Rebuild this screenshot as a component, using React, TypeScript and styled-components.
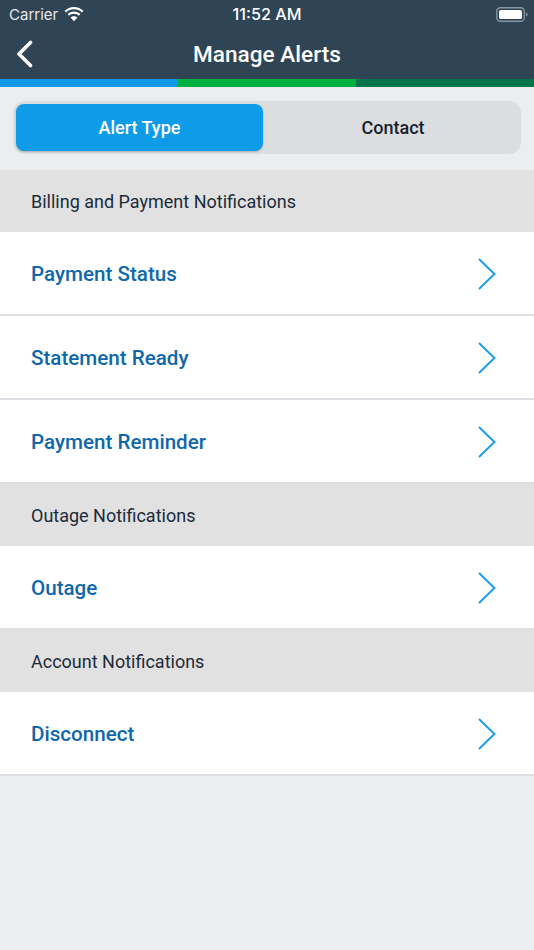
import { FC } from 'react';
import styled, { createGlobalStyle } from 'styled-components';

const Global = createGlobalStyle`
  html, body {
    margin: 0;
    padding: 0;
    background: #ecedef;
  }
  * {
    box-sizing: border-box;
  }
`;

const Page = styled.div`
  width: 534px;
  height: 950px;
  overflow: hidden;
  background: #ecedef;
  font-family: Roboto, "Liberation Sans", sans-serif;
`;

const Header = styled.header`
  background: #2f4455;
  height: 79px;
  color: #fff;
`;

const StatusBar = styled.div`
  height: 28px;
  padding: 0 9px;
  display: grid;
  grid-template-columns: 1fr auto 1fr;
  align-items: center;
  font-family: Inter, Roboto, sans-serif;
  font-size: 15px;
`;

const Carrier = styled.div`
  display: flex;
  align-items: center;
  gap: 6px;
  color: #e6e9ec;
`;

const Time = styled.div`
  font-size: 16.2px;
  font-weight: 500;
`;

const Battery = styled.svg`
  justify-self: end;
  margin-right: -3px;
`;

const NavBar = styled.div`
  height: 51px;
  padding-top: 2px;
  display: flex;
  align-items: center;
  justify-content: center;
  position: relative;
`;

const BackIcon = styled.svg`
  position: absolute;
  left: 16px;
  top: 12px;
`;

const Title = styled.h1`
  margin: 0;
  font-size: 22.6px;
  font-weight: 500;
`;

const ColorBars = styled.div`
  display: grid;
  grid-template-columns: 178px 178px 178px;
  height: 8px;
`;

const ColorBar = styled.div<{ $color: string }>`
  background: ${props => props.$color};
`;

const Tabs = styled.div`
  margin: 14px 13px 16px;
  height: 53px;
  padding: 3px;
  border-radius: 12px;
  background: #dcdddf;
  display: grid;
  grid-template-columns: 247px 1fr;
`;

const Tab = styled.div<{ $active?: boolean }>`
  display: flex;
  align-items: center;
  justify-content: center;
  font-size: 18px;
  font-weight: 500;
  border-radius: 8px;
  height: 47px;
  padding-left: ${props => props.$active ? '0' : '5px'};
  background: ${props => props.$active ? '#0e9ce9' : 'transparent'};
  box-shadow: ${props => props.$active ? '0 1px 2px rgba(0, 0, 0, 0.22)' : 'none'};
  color: ${props => props.$active ? '#fff' : '#17212c'};
`;

const SectionHeader = styled.div`
  height: 62px;
  padding-left: 31px;
  display: flex;
  align-items: center;
  background: #e1e1e2;
  color: #1c2b39;
  font-size: 18px;
`;

const Row = styled.div`
  height: 84px;
  padding: 2px 38px 0 31px;
  display: flex;
  align-items: center;
  justify-content: space-between;
  background: #fff;
  border-bottom: 2px solid #dde1e6;
  color: #0f68ab;
  font-size: 20.6px;
  font-weight: 500;
`;

const Chevron = () => (
  <svg width="18" height="32" viewBox="0 0 18 32" fill="none">
    <path d="M1.5 1.5 L16.5 16 L1.5 30.5" stroke="#1b9be6" strokeWidth="1.9" strokeLinecap="round" strokeLinejoin="miter" />
  </svg>
);

const AlertRow: FC<{ label: string }> = ({ label }) => (
  <Row>
    {label}
    <Chevron />
  </Row>
);

function App() {
  return (
    <Page>
      <Global />
      <Header>
        <StatusBar>
          <Carrier>
            Carrier
            <svg width="20" height="15" viewBox="0 0 20 15" fill="#fff">
              <path d="M10 2.2c3.1 0 5.9 1.2 8 3.2l1.4-1.6C16.900 1.400 13.600 0 10 0S3.100 1.400.6 3.800L2 5.400c2.100-2 4.900-3.200 8-3.200z" />
              <path d="M10 6.800c1.900 0 3.600.7 4.900 1.900l1.500-1.600C14.700 5.500 12.500 4.600 10 4.600s-4.700.9-6.400 2.500l1.500 1.600c1.300-1.200 3-1.900 4.900-1.900z" />
              <path d="M10 9.200c-1.300 0-2.500.5-3.400 1.300l3.400 3.800 3.400-3.800c-.9-.8-2.100-1.300-3.400-1.300z" />
            </svg>
          </Carrier>
          <Time>11:52 AM</Time>
          <Battery width="32" height="15" viewBox="0 0 32 15" fill="none">
            <rect x="0.75" y="0.75" width="27.5" height="13.5" rx="3.500" stroke="#8a97a3" strokeWidth="1.300" />
            <rect x="3" y="3" width="23" height="9" rx="1.800" fill="#fff" />
            <path d="M30 5.500c1 .3 1.500 1 1.500 2s-.5 1.700-1.500 2z" fill="#8a97a3" />
          </Battery>
        </StatusBar>
        <NavBar>
          <BackIcon width="17" height="28" viewBox="0 0 17 28" fill="none">
            <path d="M14.500 2.500 L3 14 L14.500 25.500" stroke="#fff" strokeWidth="3.600" strokeLinecap="round" strokeLinejoin="round" />
          </BackIcon>
          <Title>Manage Alerts</Title>
        </NavBar>
      </Header>
      <ColorBars>
        <ColorBar $color="#1199e8" />
        <ColorBar $color="#00b140" />
        <ColorBar $color="#00754a" />
      </ColorBars>
      <Tabs>
        <Tab $active>Alert Type</Tab>
        <Tab>Contact</Tab>
      </Tabs>
      <SectionHeader>Billing and Payment Notifications</SectionHeader>
      <AlertRow label="Payment Status" />
      <AlertRow label="Statement Ready" />
      <AlertRow label="Payment Reminder" />
      <SectionHeader>Outage Notifications</SectionHeader>
      <AlertRow label="Outage" />
      <SectionHeader>Account Notifications</SectionHeader>
      <AlertRow label="Disconnect" />
    </Page>
  );
}

export default App;
